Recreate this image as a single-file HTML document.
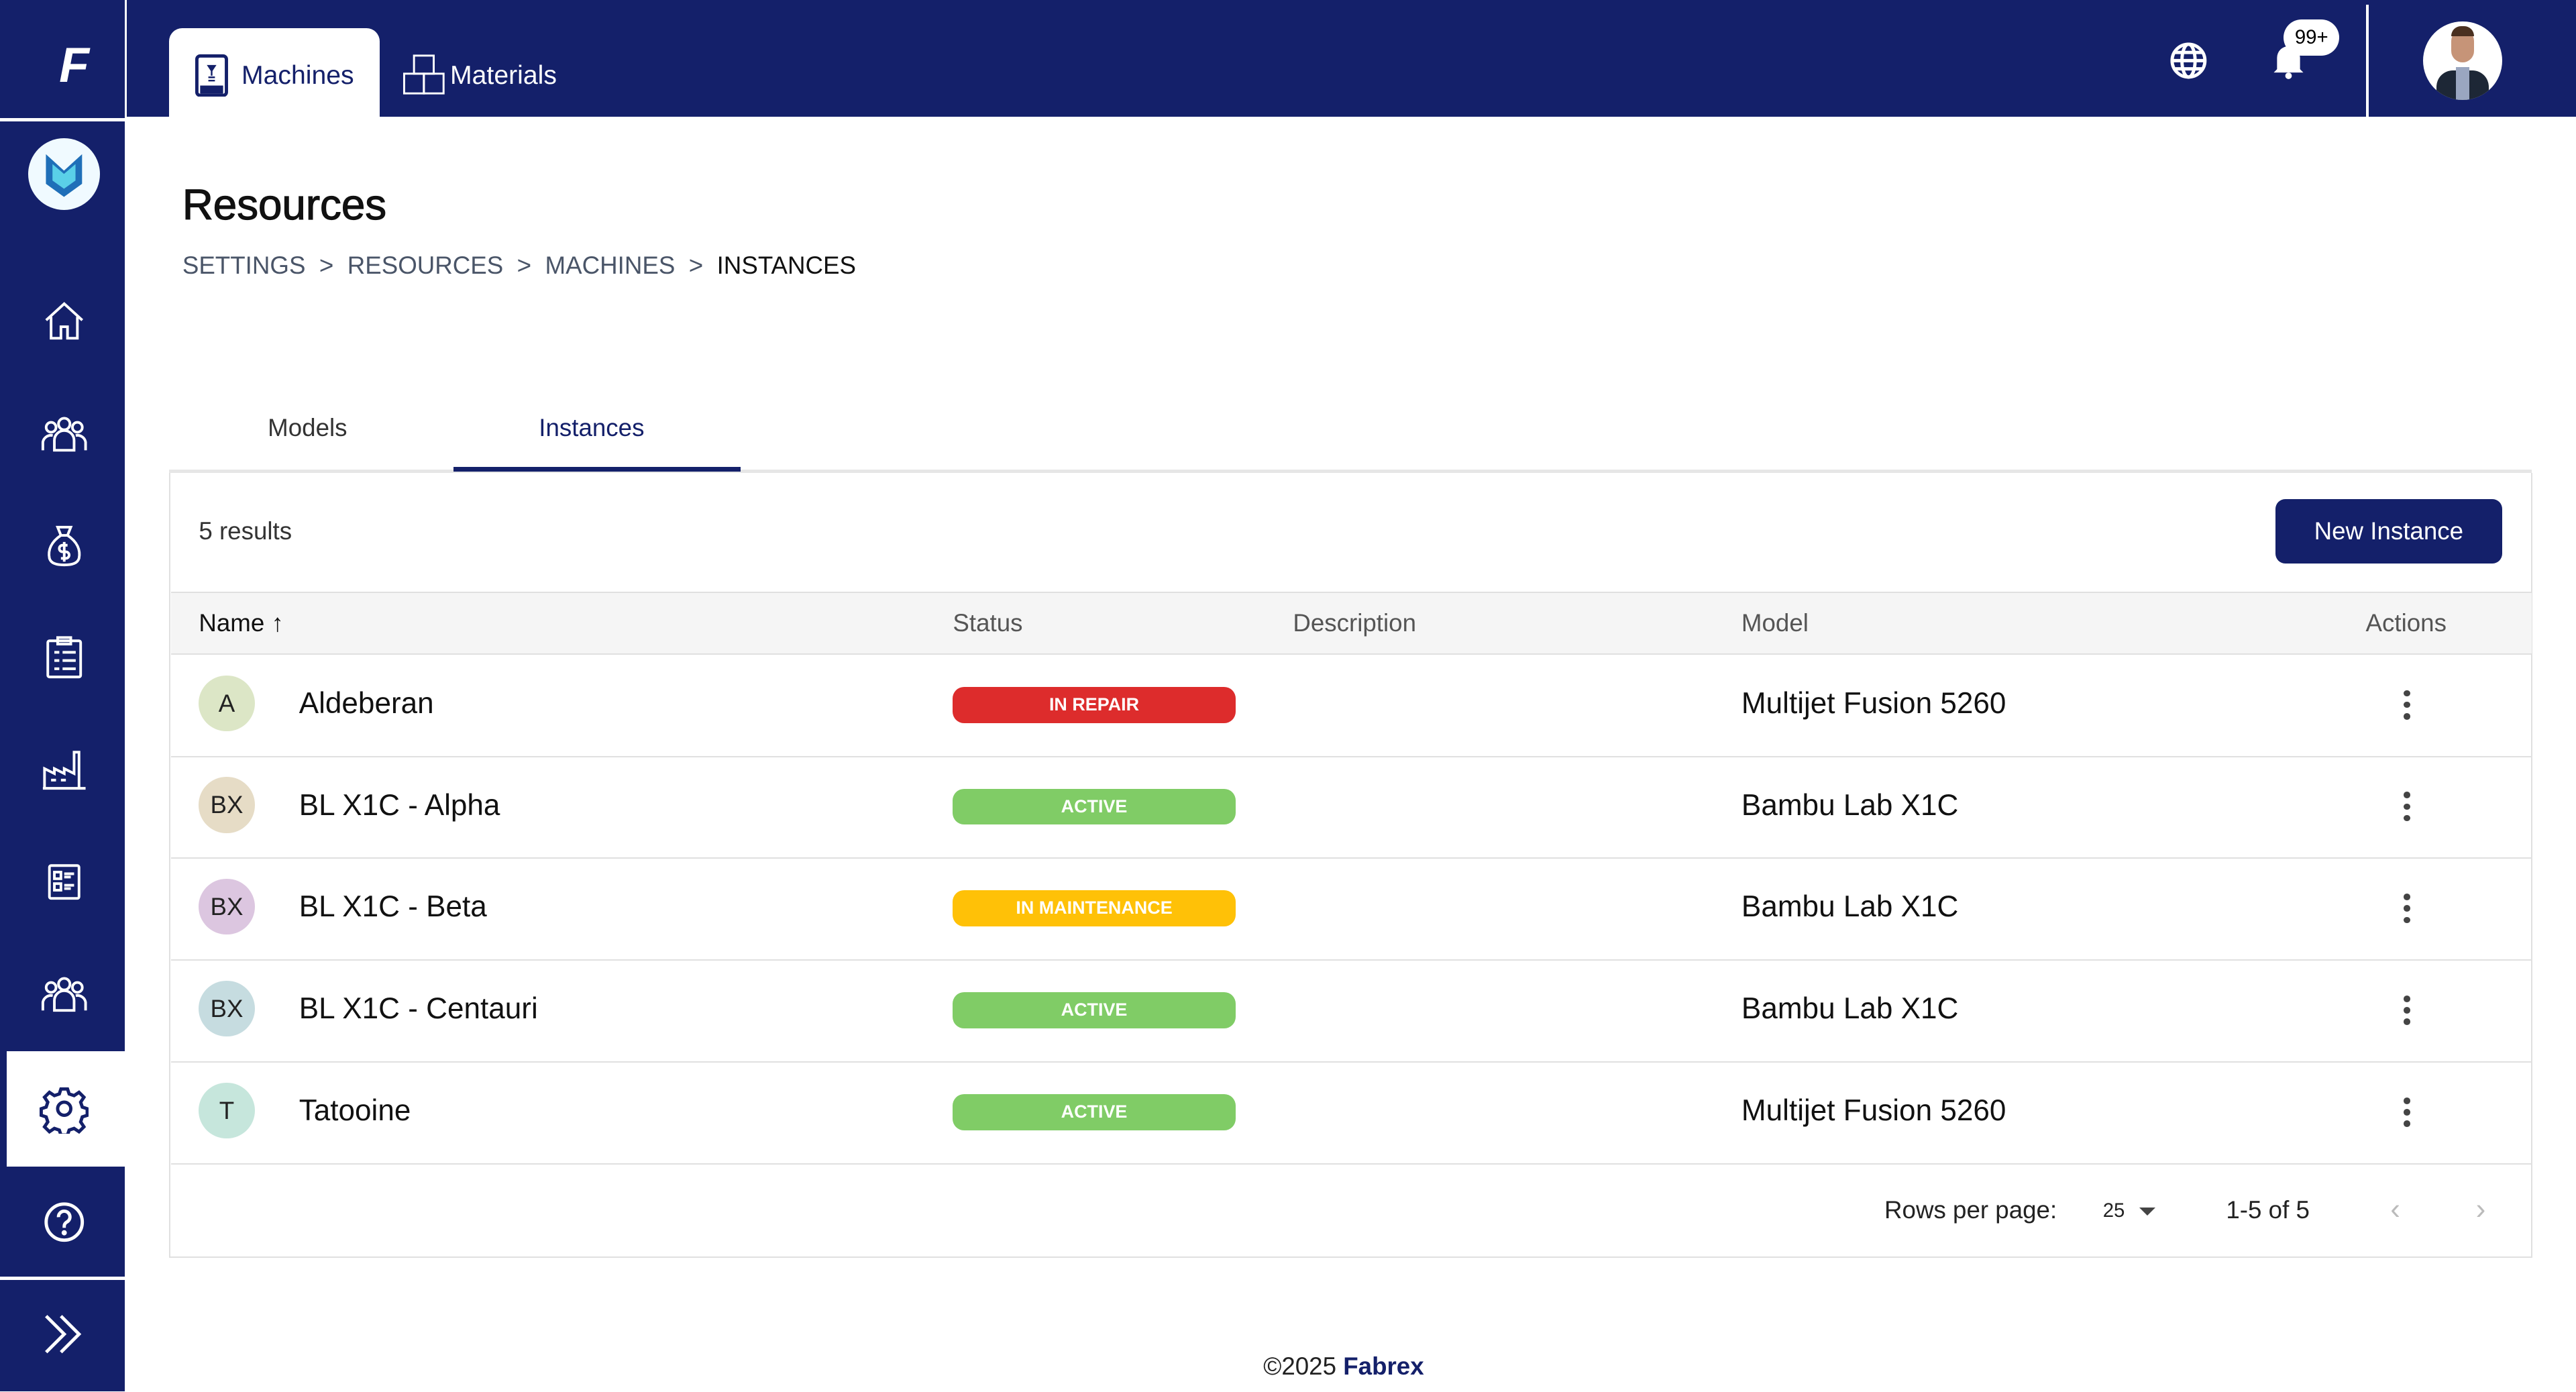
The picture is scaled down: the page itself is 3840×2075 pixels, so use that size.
<!DOCTYPE html>
<html><head><meta charset="utf-8"><style>
html{zoom:2.449}
body{margin:0;width:1568px;height:847px;overflow:hidden;background:#fff;font-family:"Liberation Sans",sans-serif;color:#222;position:relative}
.side{position:absolute;left:0;top:0;width:76px;height:847px;background:#14206a}
.top{position:absolute;left:77px;top:0;right:0;height:71px;background:#14206a}
.abs{position:absolute}
.ic{position:absolute;left:24px;width:30px;height:30px}
.ic svg{width:30px;height:30px;fill:none;stroke:#fff;stroke-width:1.6}
.chip{position:absolute;left:580px;width:172px;height:22px;border-radius:7px;color:#fff;font-size:11px;font-weight:bold;text-align:center;line-height:22px}
.row{position:absolute;left:104px;width:1437px;height:62px;border-bottom:1px solid #e0e0e0}
.av{position:absolute;left:17px;top:13px;width:34px;height:34px;border-radius:50%;text-align:center;line-height:34px;font-size:15px;color:#222}
.nm{position:absolute;left:78px;top:20px;font-size:18px;color:#111}
.md{position:absolute;left:956px;top:20px;font-size:18px;color:#111}
.dots{position:absolute;left:1359px;top:22px;width:4px}
.dots i{display:block;width:4px;height:4px;border-radius:50%;background:#444;margin-bottom:3px}
</style></head><body>
<div class="side"></div>
<div class="abs" style="left:0;top:72px;width:76px;height:2px;background:#fff"></div>
<div class="top"></div>
<div class="abs" style="left:36px;top:22px;color:#fff;font-size:30px;font-weight:bold;font-style:italic">F</div>
<div class="abs" style="left:103px;top:17px;width:128px;height:54px;background:#fff;border-radius:8px 8px 0 0"></div>
<svg class="abs" style="left:119px;top:33px" width="20" height="26" viewBox="0 0 20 26"><rect x="1" y="1" width="18" height="24" rx="2" fill="none" stroke="#14206a" stroke-width="2"/><rect x="3" y="19" width="14" height="5" fill="#14206a"/><path d="M8 7h4l-2 3z M10 10v3 M8 14h4 M8 16h4" stroke="#14206a" fill="#14206a" stroke-width="1"/></svg>
<div class="abs" style="left:147px;top:37px;font-size:16px;color:#14206a">Machines</div>
<svg class="abs" style="left:245px;top:32px" width="26" height="26" viewBox="0 0 26 26" fill="none" stroke="#fff" stroke-width="1.2"><rect x="7" y="2" width="12" height="11"/><rect x="1" y="13" width="12" height="12"/><rect x="13" y="13" width="12" height="12"/></svg>
<div class="abs" style="left:274px;top:37px;font-size:16px;color:#fff">Materials</div>
<svg class="abs" style="left:1320px;top:25px" width="24" height="24" viewBox="0 0 24 24" fill="none" stroke="#fff" stroke-width="2"><circle cx="12" cy="12" r="10"/><ellipse cx="12" cy="12" rx="4" ry="10"/><path d="M2 12h20M4 7h16M4 17h16"/></svg>
<svg class="abs" style="left:1383px;top:26px" width="20" height="22" viewBox="0 0 20 22"><path d="M3 16V9a7 7 0 0 1 14 0v7l2 2H1z" fill="#fff"/><circle cx="10" cy="20" r="2" fill="#fff"/></svg>
<div class="abs" style="left:1390px;top:12px;width:34px;height:22px;border-radius:11px;background:#fff;font-size:12px;text-align:center;line-height:22px;color:#000">99+</div>
<div class="abs" style="left:1440px;top:3px;width:2px;height:68px;background:#fff"></div>
<div class="abs" style="left:1475px;top:13px;width:48px;height:48px;border-radius:50%;background:#fff;overflow:hidden"><div style="position:absolute;left:17px;top:5px;width:14px;height:20px;border-radius:7px;background:#c69478"></div><div style="position:absolute;left:17px;top:3px;width:14px;height:6px;border-radius:6px 6px 0 0;background:#4a3020"></div><div style="position:absolute;left:8px;top:30px;width:32px;height:20px;border-radius:10px 10px 0 0;background:#1d2736"></div><div style="position:absolute;left:20px;top:28px;width:8px;height:20px;background:#9aa6c0"></div></div>
<div class="abs" style="left:17px;top:84px;width:44px;height:44px;border-radius:50%;background:#f0faff"></div>
<svg class="abs" style="left:27px;top:92px" width="24" height="28" viewBox="0 0 24 28"><path d="M1 2l11 10L23 2v18l-11 8L1 20z" fill="#1f6fb8"/><path d="M5 8l7 6 7-6v10l-7 5-7-5z" fill="#5ad0e8"/></svg>
<div class="ic" style="top:181px"><svg viewBox="0 0 30 30"><path d="M4 14L15 4l11 10M7 12v13h6v-7h4v7h6V12"/></svg></div>
<div class="ic" style="top:249px"><svg viewBox="0 0 30 30"><circle cx="15" cy="9" r="3.5"/><circle cx="7" cy="11" r="3"/><circle cx="23" cy="11" r="3"/><path d="M9 25v-6a6 6 0 0 1 12 0v6zM2 25v-5a5 5 0 0 1 6-4M28 25v-5a5 5 0 0 0-6-4"/></svg></div>
<div class="ic" style="top:317px"><svg viewBox="0 0 30 30"><path d="M11 4h8l-2 5h-4zM13 9c-6 4-8 9-7 14 1 3 4 4 9 4s8-1 9-4c1-5-1-10-7-14"/><path d="M17 15h-3a2 2 0 0 0 0 4h2a2 2 0 0 1 0 4h-3M15 13v12"/></svg></div>
<div class="ic" style="top:385px"><svg viewBox="0 0 30 30"><rect x="5" y="5" width="20" height="22" rx="1"/><rect x="11" y="3" width="8" height="4"/><path d="M9 12h3M9 17h3M9 22h3M14 12h8M14 17h8M14 22h8"/></svg></div>
<div class="ic" style="top:453px"><svg viewBox="0 0 30 30"><path d="M3 27V15l6 3v-3l6 3v-3l6 3V5h3v22zM2 27h26M7 22h3M13 22h3"/></svg></div>
<div class="ic" style="top:522px"><svg viewBox="0 0 30 30"><rect x="6" y="5" width="18" height="20" rx="1"/><rect x="9" y="9" width="4" height="4"/><rect x="9" y="16" width="4" height="4"/><path d="M15 10h6M15 12h4M15 17h6M15 19h4"/></svg></div>
<div class="ic" style="top:590px"><svg viewBox="0 0 30 30"><circle cx="15" cy="9" r="3.5"/><circle cx="7" cy="11" r="3"/><circle cx="23" cy="11" r="3"/><path d="M9 25v-6a6 6 0 0 1 12 0v6zM2 25v-5a5 5 0 0 1 6-4M28 25v-5a5 5 0 0 0-6-4"/></svg></div>
<div class="abs" style="left:4px;top:640px;width:72px;height:70px;background:#fff"></div>
<div class="ic" style="top:660px"><svg viewBox="0 0 30 30" style="stroke:#14206a;stroke-width:2"><circle cx="15" cy="15" r="4"/><path d="M13 3h4l1 3 3 1 3-2 3 3-2 3 1 3 3 1v4l-3 1-1 3 2 3-3 3-3-2-3 1-1 3h-4l-1-3-3-1-3 2-3-3 2-3-1-3-3-1v-4l3-1 1-3-2-3 3-3 3 2 3-1z"/></svg></div>
<div class="ic" style="top:729px"><svg viewBox="0 0 30 30" style="stroke-width:2"><circle cx="15" cy="15" r="11"/><path d="M11.5 12a3.5 3.5 0 1 1 5 3c-1 .6-1.5 1.3-1.5 2.5v1"/><circle cx="15" cy="21.5" r=".6" fill="#fff"/></svg></div>
<div class="abs" style="left:0;top:777px;width:76px;height:2px;background:#fff"></div>
<div class="ic" style="top:797px"><svg viewBox="0 0 30 30" style="stroke-width:2"><path d="M4 4l11 11L4 26M13 4l11 11-11 11"/></svg></div>

<div class="abs" style="left:111px;top:110px;font-size:26px;color:#111;-webkit-text-stroke:0.5px #111">Resources</div>
<div class="abs" style="left:111px;top:153px;font-size:15px;color:#4a5568;white-space:nowrap">SETTINGS &nbsp;&gt;&nbsp; RESOURCES &nbsp;&gt;&nbsp; MACHINES &nbsp;&gt;&nbsp; <span style="color:#111">INSTANCES</span></div>
<div class="abs" style="left:163px;top:252px;font-size:15px;color:#333">Models</div>
<div class="abs" style="left:328px;top:252px;font-size:15px;color:#14206a">Instances</div>
<div class="abs" style="left:103px;top:286px;width:1438px;height:2px;background:#e6e6e6"></div>
<div class="abs" style="left:276px;top:284px;width:175px;height:3px;background:#14206a"></div>
<div class="abs" style="left:103px;top:288px;width:1437px;height:477px;border:1px solid #e0e0e0;border-top:none"></div>
<div class="abs" style="left:121px;top:315px;font-size:15px;color:#333">5 results</div>
<div class="abs" style="left:1385px;top:304px;width:138px;height:39px;border-radius:6px;background:#14206a;color:#fff;font-size:15px;text-align:center;line-height:39px">New Instance</div>
<div class="abs" style="left:104px;top:360px;width:1437px;height:37px;background:#f5f5f5;border-top:1px solid #e0e0e0;border-bottom:1px solid #e0e0e0;font-size:15px;color:#555">
<span class="abs" style="left:17px;top:10px;color:#111">Name ↑</span><span class="abs" style="left:476px;top:10px">Status</span><span class="abs" style="left:683px;top:10px">Description</span><span class="abs" style="left:956px;top:10px">Model</span><span class="abs" style="left:1336px;top:10px">Actions</span></div>
<div class="row" style="top:398px"><div class="av" style="background:#dce6c6">A</div><div class="nm">Aldeberan</div><div class="md">Multijet Fusion 5260</div><div class="dots"><i></i><i></i><i></i></div></div>
<div class="row" style="top:460px"><div class="av" style="background:#e6dcc6">BX</div><div class="nm">BL X1C - Alpha</div><div class="md">Bambu Lab X1C</div><div class="dots"><i></i><i></i><i></i></div></div>
<div class="row" style="top:522px"><div class="av" style="background:#dcc6e0">BX</div><div class="nm">BL X1C - Beta</div><div class="md">Bambu Lab X1C</div><div class="dots"><i></i><i></i><i></i></div></div>
<div class="row" style="top:584px"><div class="av" style="background:#c6dce0">BX</div><div class="nm">BL X1C - Centauri</div><div class="md">Bambu Lab X1C</div><div class="dots"><i></i><i></i><i></i></div></div>
<div class="row" style="top:646px"><div class="av" style="background:#c6e6dc">T</div><div class="nm">Tatooine</div><div class="md">Multijet Fusion 5260</div><div class="dots"><i></i><i></i><i></i></div></div>
<div class="chip" style="top:418px;background:#dd2c2c">IN REPAIR</div>
<div class="chip" style="top:480px;background:#80cc66">ACTIVE</div>
<div class="chip" style="top:542px;background:#ffc107">IN MAINTENANCE</div>
<div class="chip" style="top:604px;background:#80cc66">ACTIVE</div>
<div class="chip" style="top:666px;background:#80cc66">ACTIVE</div>
<div class="abs" style="left:1147px;top:728px;font-size:15px;color:#222">Rows per page:</div>
<div class="abs" style="left:1280px;top:730px;font-size:12px;color:#222">25</div>
<div class="abs" style="left:1302px;top:735px;border-left:5px solid transparent;border-right:5px solid transparent;border-top:5px solid #444"></div>
<div class="abs" style="left:1355px;top:728px;font-size:15px;color:#222">1-5 of 5</div>
<div class="abs" style="left:1455px;top:726px;font-size:18px;color:#bbb">‹</div>
<div class="abs" style="left:1507px;top:726px;font-size:18px;color:#bbb">›</div>
<div class="abs" style="left:769px;top:823px;font-size:15px;color:#222">©2025 <b style="color:#14206a">Fabrex</b></div>
</body></html>
